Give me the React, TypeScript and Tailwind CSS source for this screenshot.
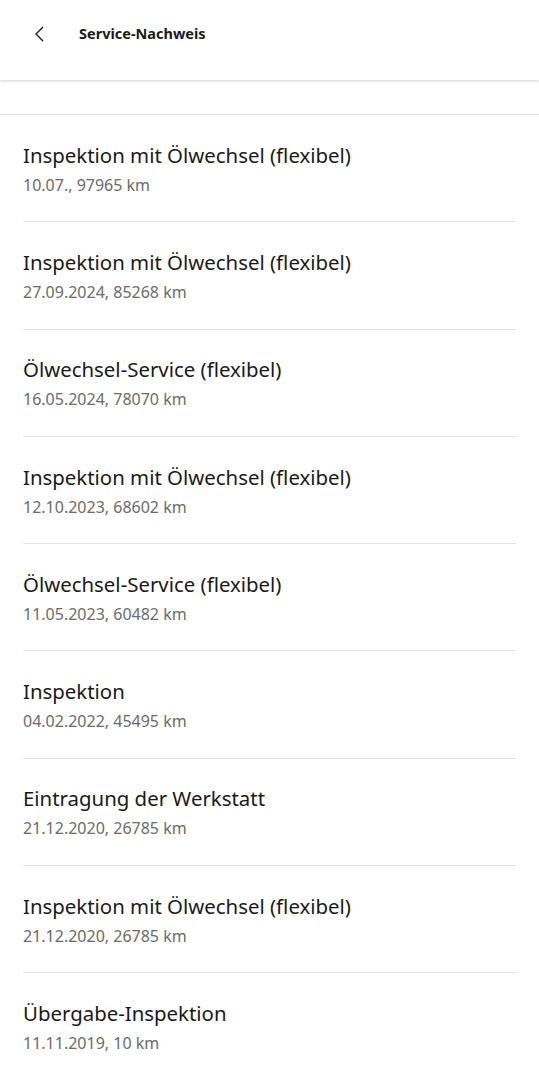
const entries = [
  { title: 'Inspektion mit Ölwechsel (flexibel)', detail: '10.07., 97965 km' },
  { title: 'Inspektion mit Ölwechsel (flexibel)', detail: '27.09.2024, 85268 km' },
  { title: 'Ölwechsel-Service (flexibel)', detail: '16.05.2024, 78070 km' },
  { title: 'Inspektion mit Ölwechsel (flexibel)', detail: '12.10.2023, 68602 km' },
  { title: 'Ölwechsel-Service (flexibel)', detail: '11.05.2023, 60482 km' },
  { title: 'Inspektion', detail: '04.02.2022, 45495 km' },
  { title: 'Eintragung der Werkstatt', detail: '21.12.2020, 26785 km' },
  { title: 'Inspektion mit Ölwechsel (flexibel)', detail: '21.12.2020, 26785 km' },
  { title: 'Übergabe-Inspektion', detail: '11.11.2019, 10 km' },
];

export default function App() {
  return (
    <div className="w-[539px] h-[1080px] overflow-hidden bg-white font-['Noto_Sans',sans-serif]">
      <header className="relative z-10 h-[80px] bg-white shadow-[0_1px_3px_rgba(0,0,0,0.18)]">
        <div className="h-[68px] flex items-center">
          <button className="w-[79px] h-full flex items-center pl-[33px]">
            <svg width="12" height="16" viewBox="0 0 12 16" fill="none">
              <path d="M10 1 L3 8 L10 15" stroke="#1a1a1a" strokeWidth="1.4" />
            </svg>
          </button>
          <h1 className="text-[14.5px] font-bold text-[#1a1a1a]">Service-Nachweis</h1>
        </div>
      </header>
      <div className="h-[35px] border-b border-[#dcdcdc]" />
      <ul>
        {entries.map((e, i) => (
          <li
            key={i}
            className={`h-[107.3px] flex flex-col justify-center ${
              i === entries.length - 1 ? 'border-b border-[#e6e6e6]' : 'mx-[23px] border-b border-[#e3e3e3]'
            }`}
          >
            <div className={i === entries.length - 1 ? 'px-[23px]' : ''}>
              <div className="text-[20.4px] leading-[26px] text-[#1a1a1a]">{e.title}</div>
              <div className="mt-[7px] text-[16px] leading-[20px] text-[#6b6b6b]">{e.detail}</div>
            </div>
          </li>
        ))}
      </ul>
    </div>
  );
}
